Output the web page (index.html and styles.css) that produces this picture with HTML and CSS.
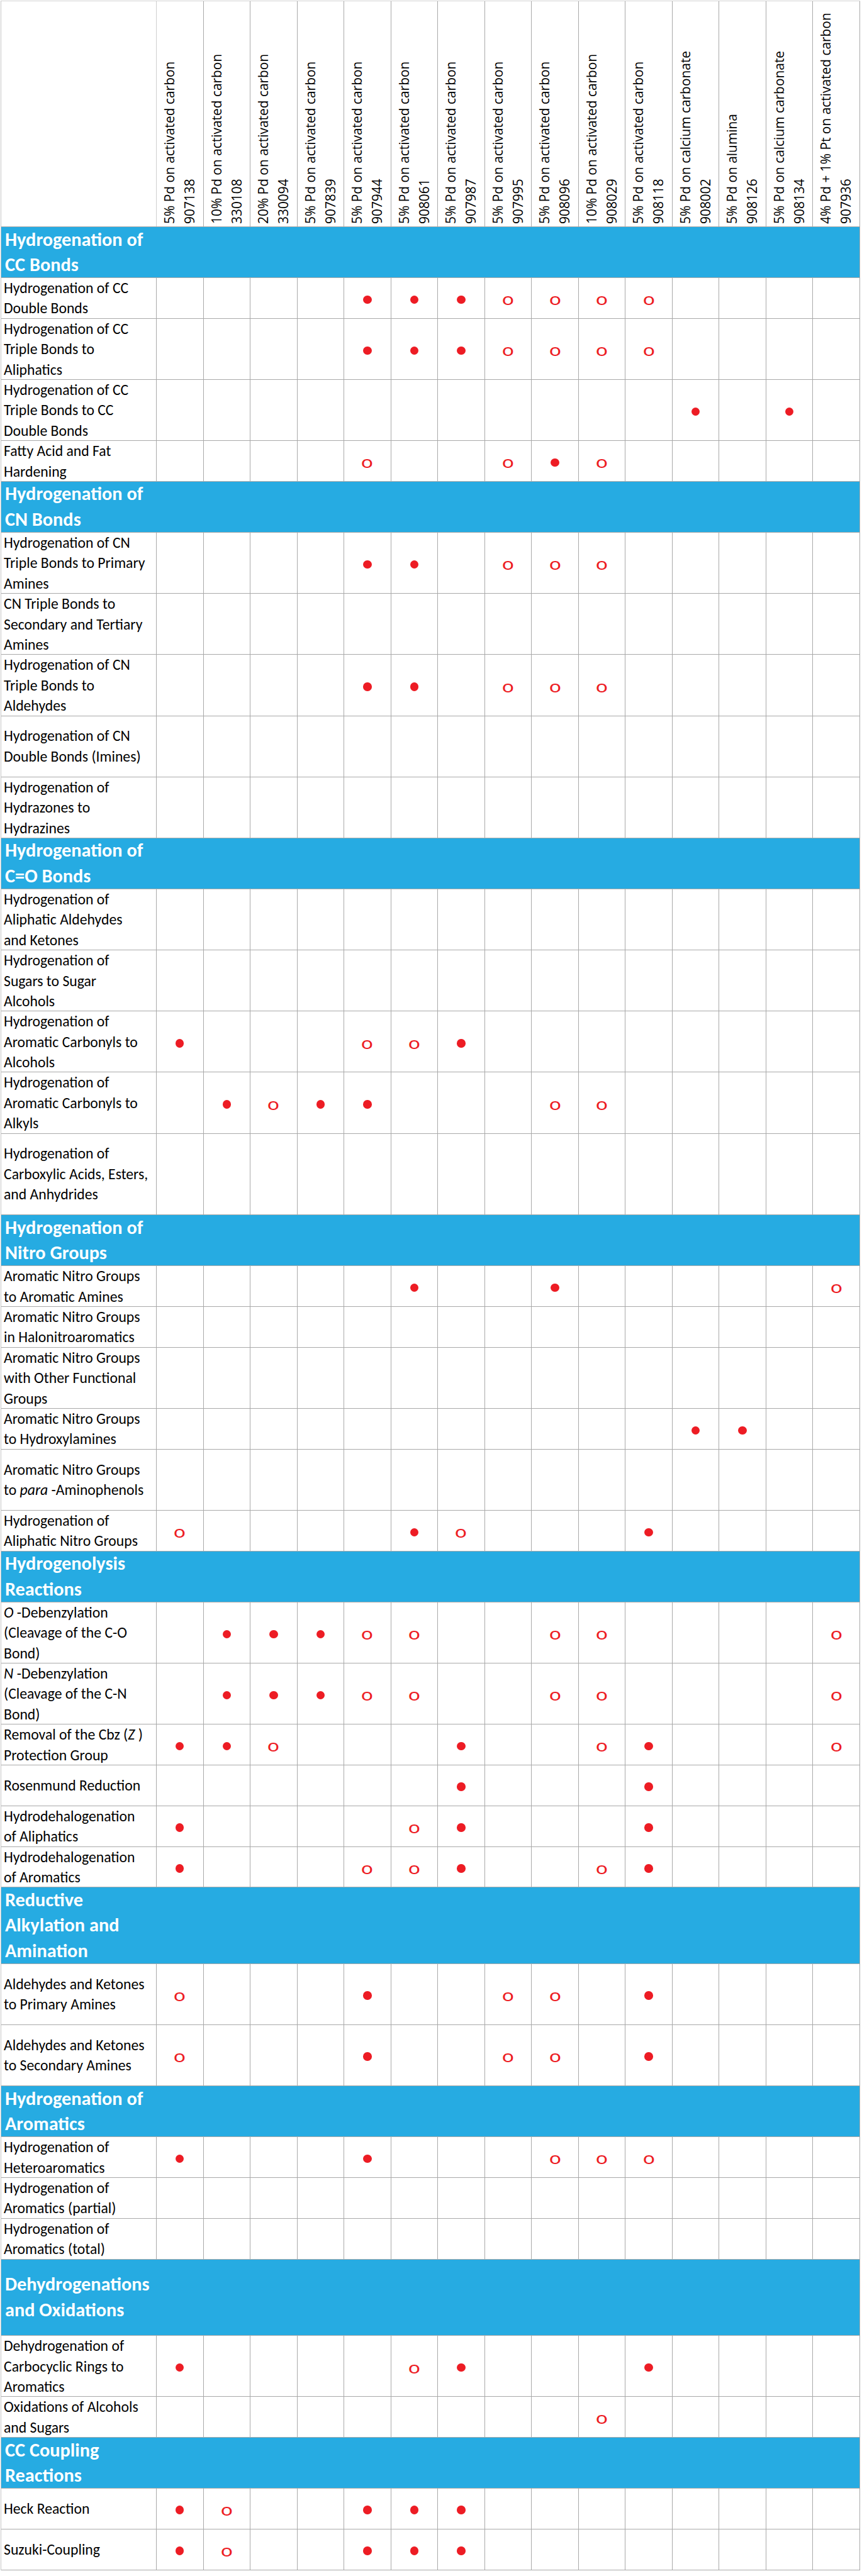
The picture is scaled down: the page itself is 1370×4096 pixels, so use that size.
FILE: index.html
```html
<!DOCTYPE html>
<html lang="en">
<head>
<meta charset="utf-8">
<title>Catalyst selection guide</title>
<link rel="stylesheet" href="styles.css">
</head>
<body>
<div class="matrix">
  <div class="row head">
    <div class="corner"></div>
    <div class="hc"><div class="vt">5% Pd on activated carbon<br>907138</div></div>
    <div class="hc"><div class="vt">10% Pd on activated carbon<br>330108</div></div>
    <div class="hc"><div class="vt">20% Pd on activated carbon<br>330094</div></div>
    <div class="hc"><div class="vt">5% Pd on activated carbon<br>907839</div></div>
    <div class="hc"><div class="vt">5% Pd on activated carbon<br>907944</div></div>
    <div class="hc"><div class="vt">5% Pd on activated carbon<br>908061</div></div>
    <div class="hc"><div class="vt">5% Pd on activated carbon<br>907987</div></div>
    <div class="hc"><div class="vt">5% Pd on activated carbon<br>907995</div></div>
    <div class="hc"><div class="vt">5% Pd on activated carbon<br>908096</div></div>
    <div class="hc"><div class="vt">10% Pd on activated carbon<br>908029</div></div>
    <div class="hc"><div class="vt">5% Pd on activated carbon<br>908118</div></div>
    <div class="hc"><div class="vt">5% Pd on calcium carbonate<br>908002</div></div>
    <div class="hc"><div class="vt">5% Pd on alumina<br>908126</div></div>
    <div class="hc"><div class="vt">5% Pd on calcium carbonate<br>908134</div></div>
    <div class="hc"><div class="vt">4% Pd + 1% Pt on activated carbon<br>907936</div></div>
  </div>

  <div class="sec"><p class="sec-name">Hydrogenation of<br>CC Bonds</p></div>
  <div class="row r2"><div class="lbl"><p>Hydrogenation of CC<br>Double Bonds</p></div><div></div><div></div><div></div><div></div><div><span class="dot"></span></div><div><span class="dot"></span></div><div><span class="dot"></span></div><div><span class="ring">o</span></div><div><span class="ring">o</span></div><div><span class="ring">o</span></div><div><span class="ring">o</span></div><div></div><div></div><div></div><div></div></div>
  <div class="row r3"><div class="lbl"><p>Hydrogenation of CC<br>Triple Bonds to<br>Aliphatics</p></div><div></div><div></div><div></div><div></div><div><span class="dot"></span></div><div><span class="dot"></span></div><div><span class="dot"></span></div><div><span class="ring">o</span></div><div><span class="ring">o</span></div><div><span class="ring">o</span></div><div><span class="ring">o</span></div><div></div><div></div><div></div><div></div></div>
  <div class="row r3"><div class="lbl"><p>Hydrogenation of CC<br>Triple Bonds to CC<br>Double Bonds</p></div><div></div><div></div><div></div><div></div><div></div><div></div><div></div><div></div><div></div><div></div><div></div><div><span class="dot"></span></div><div></div><div><span class="dot"></span></div><div></div></div>
  <div class="row r2"><div class="lbl"><p>Fatty Acid and Fat<br>Hardening</p></div><div></div><div></div><div></div><div></div><div><span class="ring">o</span></div><div></div><div></div><div><span class="ring">o</span></div><div><span class="dot"></span></div><div><span class="ring">o</span></div><div></div><div></div><div></div><div></div><div></div></div>

  <div class="sec"><p class="sec-name">Hydrogenation of<br>CN Bonds</p></div>
  <div class="row r3"><div class="lbl"><p>Hydrogenation of CN<br>Triple Bonds to Primary<br>Amines</p></div><div></div><div></div><div></div><div></div><div><span class="dot"></span></div><div><span class="dot"></span></div><div></div><div><span class="ring">o</span></div><div><span class="ring">o</span></div><div><span class="ring">o</span></div><div></div><div></div><div></div><div></div><div></div></div>
  <div class="row r3"><div class="lbl"><p>CN Triple Bonds to<br>Secondary and Tertiary<br>Amines</p></div><div></div><div></div><div></div><div></div><div></div><div></div><div></div><div></div><div></div><div></div><div></div><div></div><div></div><div></div><div></div></div>
  <div class="row r3"><div class="lbl"><p>Hydrogenation of CN<br>Triple Bonds to<br>Aldehydes</p></div><div></div><div></div><div></div><div></div><div><span class="dot"></span></div><div><span class="dot"></span></div><div></div><div><span class="ring">o</span></div><div><span class="ring">o</span></div><div><span class="ring">o</span></div><div></div><div></div><div></div><div></div><div></div></div>
  <div class="row r3"><div class="lbl"><p>Hydrogenation of CN<br>Double Bonds (Imines)</p></div><div></div><div></div><div></div><div></div><div></div><div></div><div></div><div></div><div></div><div></div><div></div><div></div><div></div><div></div><div></div></div>
  <div class="row r3"><div class="lbl"><p>Hydrogenation of<br>Hydrazones to<br>Hydrazines</p></div><div></div><div></div><div></div><div></div><div></div><div></div><div></div><div></div><div></div><div></div><div></div><div></div><div></div><div></div><div></div></div>

  <div class="sec"><p class="sec-name">Hydrogenation of<br>C=O Bonds</p></div>
  <div class="row r3"><div class="lbl"><p>Hydrogenation of<br>Aliphatic Aldehydes<br>and Ketones</p></div><div></div><div></div><div></div><div></div><div></div><div></div><div></div><div></div><div></div><div></div><div></div><div></div><div></div><div></div><div></div></div>
  <div class="row r3"><div class="lbl"><p>Hydrogenation of<br>Sugars to Sugar<br>Alcohols</p></div><div></div><div></div><div></div><div></div><div></div><div></div><div></div><div></div><div></div><div></div><div></div><div></div><div></div><div></div><div></div></div>
  <div class="row r3"><div class="lbl"><p>Hydrogenation of<br>Aromatic Carbonyls to<br>Alcohols</p></div><div><span class="dot"></span></div><div></div><div></div><div></div><div><span class="ring">o</span></div><div><span class="ring">o</span></div><div><span class="dot"></span></div><div></div><div></div><div></div><div></div><div></div><div></div><div></div><div></div></div>
  <div class="row r3"><div class="lbl"><p>Hydrogenation of<br>Aromatic Carbonyls to<br>Alkyls</p></div><div></div><div><span class="dot"></span></div><div><span class="ring">o</span></div><div><span class="dot"></span></div><div><span class="dot"></span></div><div></div><div></div><div></div><div><span class="ring">o</span></div><div><span class="ring">o</span></div><div></div><div></div><div></div><div></div><div></div></div>
  <div class="row r4"><div class="lbl"><p>Hydrogenation of<br>Carboxylic Acids, Esters,<br>and Anhydrides</p></div><div></div><div></div><div></div><div></div><div></div><div></div><div></div><div></div><div></div><div></div><div></div><div></div><div></div><div></div><div></div></div>

  <div class="sec"><p class="sec-name">Hydrogenation of<br>Nitro Groups</p></div>
  <div class="row r2"><div class="lbl"><p>Aromatic Nitro Groups<br>to Aromatic Amines</p></div><div></div><div></div><div></div><div></div><div></div><div><span class="dot"></span></div><div></div><div></div><div><span class="dot"></span></div><div></div><div></div><div></div><div></div><div></div><div><span class="ring">o</span></div></div>
  <div class="row r2"><div class="lbl"><p>Aromatic Nitro Groups<br>in Halonitroaromatics</p></div><div></div><div></div><div></div><div></div><div></div><div></div><div></div><div></div><div></div><div></div><div></div><div></div><div></div><div></div><div></div></div>
  <div class="row r3"><div class="lbl"><p>Aromatic Nitro Groups<br>with Other Functional<br>Groups</p></div><div></div><div></div><div></div><div></div><div></div><div></div><div></div><div></div><div></div><div></div><div></div><div></div><div></div><div></div><div></div></div>
  <div class="row r2"><div class="lbl"><p>Aromatic Nitro Groups<br>to Hydroxylamines</p></div><div></div><div></div><div></div><div></div><div></div><div></div><div></div><div></div><div></div><div></div><div></div><div><span class="dot"></span></div><div><span class="dot"></span></div><div></div><div></div></div>
  <div class="row r3"><div class="lbl"><p>Aromatic Nitro Groups<br>to <i>para</i> -Aminophenols</p></div><div></div><div></div><div></div><div></div><div></div><div></div><div></div><div></div><div></div><div></div><div></div><div></div><div></div><div></div><div></div></div>
  <div class="row r2"><div class="lbl"><p>Hydrogenation of<br>Aliphatic Nitro Groups</p></div><div><span class="ring">o</span></div><div></div><div></div><div></div><div></div><div><span class="dot"></span></div><div><span class="ring">o</span></div><div></div><div></div><div></div><div><span class="dot"></span></div><div></div><div></div><div></div><div></div></div>

  <div class="sec"><p class="sec-name">Hydrogenolysis<br>Reactions</p></div>
  <div class="row r3"><div class="lbl"><p><i>O</i> -Debenzylation<br>(Cleavage of the C-O<br>Bond)</p></div><div></div><div><span class="dot"></span></div><div><span class="dot"></span></div><div><span class="dot"></span></div><div><span class="ring">o</span></div><div><span class="ring">o</span></div><div></div><div></div><div><span class="ring">o</span></div><div><span class="ring">o</span></div><div></div><div></div><div></div><div></div><div><span class="ring">o</span></div></div>
  <div class="row r3"><div class="lbl"><p><i>N</i> -Debenzylation<br>(Cleavage of the C-N<br>Bond)</p></div><div></div><div><span class="dot"></span></div><div><span class="dot"></span></div><div><span class="dot"></span></div><div><span class="ring">o</span></div><div><span class="ring">o</span></div><div></div><div></div><div><span class="ring">o</span></div><div><span class="ring">o</span></div><div></div><div></div><div></div><div></div><div><span class="ring">o</span></div></div>
  <div class="row r2"><div class="lbl"><p>Removal of the Cbz (<i>Z</i> )<br>Protection Group</p></div><div><span class="dot"></span></div><div><span class="dot"></span></div><div><span class="ring">o</span></div><div></div><div></div><div></div><div><span class="dot"></span></div><div></div><div></div><div><span class="ring">o</span></div><div><span class="dot"></span></div><div></div><div></div><div></div><div><span class="ring">o</span></div></div>
  <div class="row r2"><div class="lbl"><p>Rosenmund Reduction</p></div><div></div><div></div><div></div><div></div><div></div><div></div><div><span class="dot"></span></div><div></div><div></div><div></div><div><span class="dot"></span></div><div></div><div></div><div></div><div></div></div>
  <div class="row r2"><div class="lbl"><p>Hydrodehalogenation<br>of Aliphatics</p></div><div><span class="dot"></span></div><div></div><div></div><div></div><div></div><div><span class="ring">o</span></div><div><span class="dot"></span></div><div></div><div></div><div></div><div><span class="dot"></span></div><div></div><div></div><div></div><div></div></div>
  <div class="row r2"><div class="lbl"><p>Hydrodehalogenation<br>of Aromatics</p></div><div><span class="dot"></span></div><div></div><div></div><div></div><div><span class="ring">o</span></div><div><span class="ring">o</span></div><div><span class="dot"></span></div><div></div><div></div><div><span class="ring">o</span></div><div><span class="dot"></span></div><div></div><div></div><div></div><div></div></div>

  <div class="sec sec-tall"><p class="sec-name">Reductive<br>Alkylation and<br>Amination</p></div>
  <div class="row r3"><div class="lbl"><p>Aldehydes and Ketones<br>to Primary Amines</p></div><div><span class="ring">o</span></div><div></div><div></div><div></div><div><span class="dot"></span></div><div></div><div></div><div><span class="ring">o</span></div><div><span class="ring">o</span></div><div></div><div><span class="dot"></span></div><div></div><div></div><div></div><div></div></div>
  <div class="row r3"><div class="lbl"><p>Aldehydes and Ketones<br>to Secondary Amines</p></div><div><span class="ring">o</span></div><div></div><div></div><div></div><div><span class="dot"></span></div><div></div><div></div><div><span class="ring">o</span></div><div><span class="ring">o</span></div><div></div><div><span class="dot"></span></div><div></div><div></div><div></div><div></div></div>

  <div class="sec"><p class="sec-name">Hydrogenation of<br>Aromatics</p></div>
  <div class="row r2"><div class="lbl"><p>Hydrogenation of<br>Heteroaromatics</p></div><div><span class="dot"></span></div><div></div><div></div><div></div><div><span class="dot"></span></div><div></div><div></div><div></div><div><span class="ring">o</span></div><div><span class="ring">o</span></div><div><span class="ring">o</span></div><div></div><div></div><div></div><div></div></div>
  <div class="row r2"><div class="lbl"><p>Hydrogenation of<br>Aromatics (partial)</p></div><div></div><div></div><div></div><div></div><div></div><div></div><div></div><div></div><div></div><div></div><div></div><div></div><div></div><div></div><div></div></div>
  <div class="row r2"><div class="lbl"><p>Hydrogenation of<br>Aromatics (total)</p></div><div></div><div></div><div></div><div></div><div></div><div></div><div></div><div></div><div></div><div></div><div></div><div></div><div></div><div></div><div></div></div>

  <div class="sec sec-tall"><p class="sec-name">Dehydrogenations<br>and Oxidations</p></div>
  <div class="row r3"><div class="lbl"><p>Dehydrogenation of<br>Carbocyclic Rings to<br>Aromatics</p></div><div><span class="dot"></span></div><div></div><div></div><div></div><div></div><div><span class="ring">o</span></div><div><span class="dot"></span></div><div></div><div></div><div></div><div><span class="dot"></span></div><div></div><div></div><div></div><div></div></div>
  <div class="row r2"><div class="lbl"><p>Oxidations of Alcohols<br>and Sugars</p></div><div></div><div></div><div></div><div></div><div></div><div></div><div></div><div></div><div></div><div><span class="ring">o</span></div><div></div><div></div><div></div><div></div><div></div></div>

  <div class="sec"><p class="sec-name">CC Coupling<br>Reactions</p></div>
  <div class="row r2"><div class="lbl"><p>Heck Reaction</p></div><div><span class="dot"></span></div><div><span class="ring">o</span></div><div></div><div></div><div><span class="dot"></span></div><div><span class="dot"></span></div><div><span class="dot"></span></div><div></div><div></div><div></div><div></div><div></div><div></div><div></div><div></div></div>
  <div class="row r2"><div class="lbl"><p>Suzuki-Coupling</p></div><div><span class="dot"></span></div><div><span class="ring">o</span></div><div></div><div></div><div><span class="dot"></span></div><div><span class="dot"></span></div><div><span class="dot"></span></div><div></div><div></div><div></div><div></div><div></div><div></div><div></div><div></div></div>
</div>
</body>
</html>
```

FILE: styles.css
```css
html, body {
  margin: 0;
  padding: 0;
  background: #ffffff;
}

body {
  font-family: Carlito, Lato, "Open Sans", sans-serif;
  color: #000000;
}

.matrix {
  width: 1366px;
  margin: 1px 0 0 1px;
  box-sizing: border-box;
  border-top: 1px solid #d2d2d2;
  border-left: 1px solid #c6c6c6;
}

.row {
  display: grid;
  grid-template-columns: 247px repeat(15, 1fr);
  box-sizing: border-box;
  border-bottom: 1px solid #a9a9a9;
}

.row > div {
  border-right: 1px solid #a9a9a9;
  display: flex;
  align-items: center;
  justify-content: center;
  min-width: 0;
}

.r2 { height: 64.8px; }
.r3 { height: 97.2px; }
.r4 { height: 129.6px; }

.lbl {
  padding-left: 4px;
  justify-content: flex-start !important;
}

.lbl p {
  margin: 0;
  font-size: 23.7px;
  line-height: 32.4px;
  white-space: nowrap;
}

.head {
  height: 359px;
}

.head > .hc {
  align-items: flex-start;
}

.head > .corner {
  border-right-color: #cfcfcf;
}

.vt {
  writing-mode: vertical-rl;
  transform: rotate(180deg);
  height: 358px;
  box-sizing: border-box;
  padding-top: 3.5px;
  font-family: "Open Sans", "DejaVu Sans", sans-serif;
  font-size: 20.9px;
  line-height: 31.8px;
  white-space: nowrap;
  text-align: start;
}

.sec {
  display: flex;
  align-items: center;
  height: 81px;
  box-sizing: border-box;
  background: #26abe2;
  border-bottom: 1px solid #a9a9a9;
  border-right: 1px solid #a9a9a9;
}

.sec-tall {
  height: 121.5px;
}

.sec-name {
  margin: 0;
  padding-left: 6px;
  color: #ffffff;
  font-weight: 700;
  font-size: 30.3px;
  line-height: 40.5px;
  white-space: nowrap;
}

.dot {
  display: block;
  width: 13.4px;
  height: 13.4px;
  margin-top: 4px;
  border-radius: 50%;
  background: #ed1c24;
}

.ring {
  display: inline-block;
  margin-top: 2px;
  color: #ed1c24;
  font-family: Lato, "Open Sans", sans-serif;
  font-size: 26.5px;
  line-height: 26.5px;
  transform: scaleX(1.25);
}
```
